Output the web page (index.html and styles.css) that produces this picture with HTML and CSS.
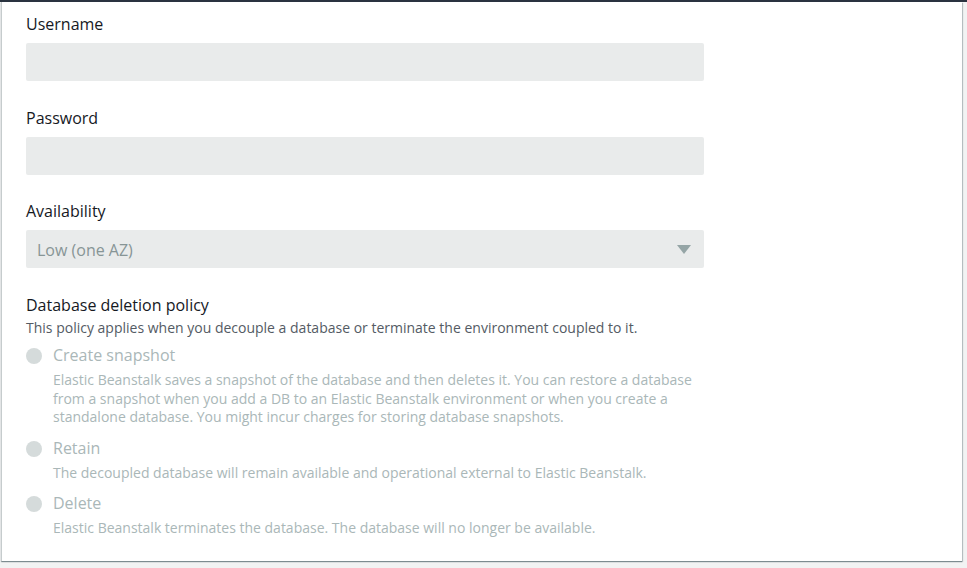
FILE: index.html
```html
<!DOCTYPE html>
<html>
<head>
<meta charset="utf-8">
<link rel="stylesheet" href="styles.css">
</head>
<body>
<div class="topbar"></div>
<div class="card">
  <div class="field">
    <label class="label">Username</label>
    <div class="input"></div>
  </div>
  <div class="field">
    <label class="label">Password</label>
    <div class="input"></div>
  </div>
  <div class="field">
    <label class="label">Availability</label>
    <div class="input select">
      <span>Low (one AZ)</span>
      <svg class="caret" width="14" height="9" viewBox="0 0 14 9"><path d="M0 0H14L7 9Z" fill="#95a5a6"/></svg>
    </div>
  </div>
  <div class="policy">
    <div class="label">Database deletion policy</div>
    <div class="desc">This policy applies when you decouple a database or terminate the environment coupled to it.</div>
    <div class="options">
      <div class="option">
        <span class="radio"></span>
        <div class="opt-body">
          <div class="opt-title">Create snapshot</div>
          <div class="opt-desc">Elastic Beanstalk saves a snapshot of the database and then deletes it. You can restore a database from a snapshot when you add a DB to an Elastic Beanstalk environment or when you create a standalone database. You might incur charges for storing database snapshots.</div>
        </div>
      </div>
      <div class="option">
        <span class="radio"></span>
        <div class="opt-body">
          <div class="opt-title">Retain</div>
          <div class="opt-desc">The decoupled database will remain available and operational external to Elastic Beanstalk.</div>
        </div>
      </div>
      <div class="option">
        <span class="radio"></span>
        <div class="opt-body">
          <div class="opt-title">Delete</div>
          <div class="opt-desc">Elastic Beanstalk terminates the database. The database will no longer be available.</div>
        </div>
      </div>
    </div>
  </div>
</div>
</body>
</html>
```

FILE: styles.css
```css
html, body {
  margin: 0;
  padding: 0;
}
body {
  background: #f2f3f3;
  font-family: "Open Sans", "Noto Sans", sans-serif;
  color: #16191f;
  width: 967px;
  height: 568px;
  overflow: hidden;
}
.topbar {
  height: 2px;
  background: #2a3340;
}
.card {
  margin-left: 1px;
  width: 961px;
  height: 559px;
  box-sizing: border-box;
  background: #fff;
  border-left: 1px solid #c6cccd;
  box-shadow: 0 1px 1px 0 rgba(0, 28, 36, 0.35), 1px 1px 1px 0 rgba(0, 28, 36, 0.2);
  padding: 11px 0 0 24px;
}
.field {
  display: flex;
  flex-direction: column;
  margin-bottom: 25.5px;
}
.label {
  font-size: 16px;
  line-height: 22px;
  color: #16191f;
  margin-bottom: 8px;
}
.input {
  width: 678px;
  height: 38px;
  background: #e9ebeb;
  border-radius: 2px;
}
.select {
  display: flex;
  align-items: center;
  justify-content: space-between;
  box-sizing: border-box;
  padding: 1px 13px 0 11px;
  color: #879596;
  font-size: 16px;
}
.policy .label {
  margin-bottom: 0;
}
.desc {
  font-size: 14px;
  line-height: 20px;
  color: #545b64;
  margin-top: 2.5px;
}
.options {
  display: flex;
  flex-direction: column;
  gap: 10px;
  margin-top: 6px;
}
.option {
  display: flex;
  gap: 11px;
  align-items: flex-start;
}
.radio {
  flex: none;
  width: 16px;
  height: 16px;
  border-radius: 50%;
  background: #d5dbdb;
  margin-top: 4px;
}
.opt-title {
  font-size: 16px;
  line-height: 22px;
  color: #aab7b8;
}
.opt-desc {
  font-size: 14px;
  line-height: 18.5px;
  color: #aab7b8;
  width: 650px;
  margin-top: 5px;
}
```
